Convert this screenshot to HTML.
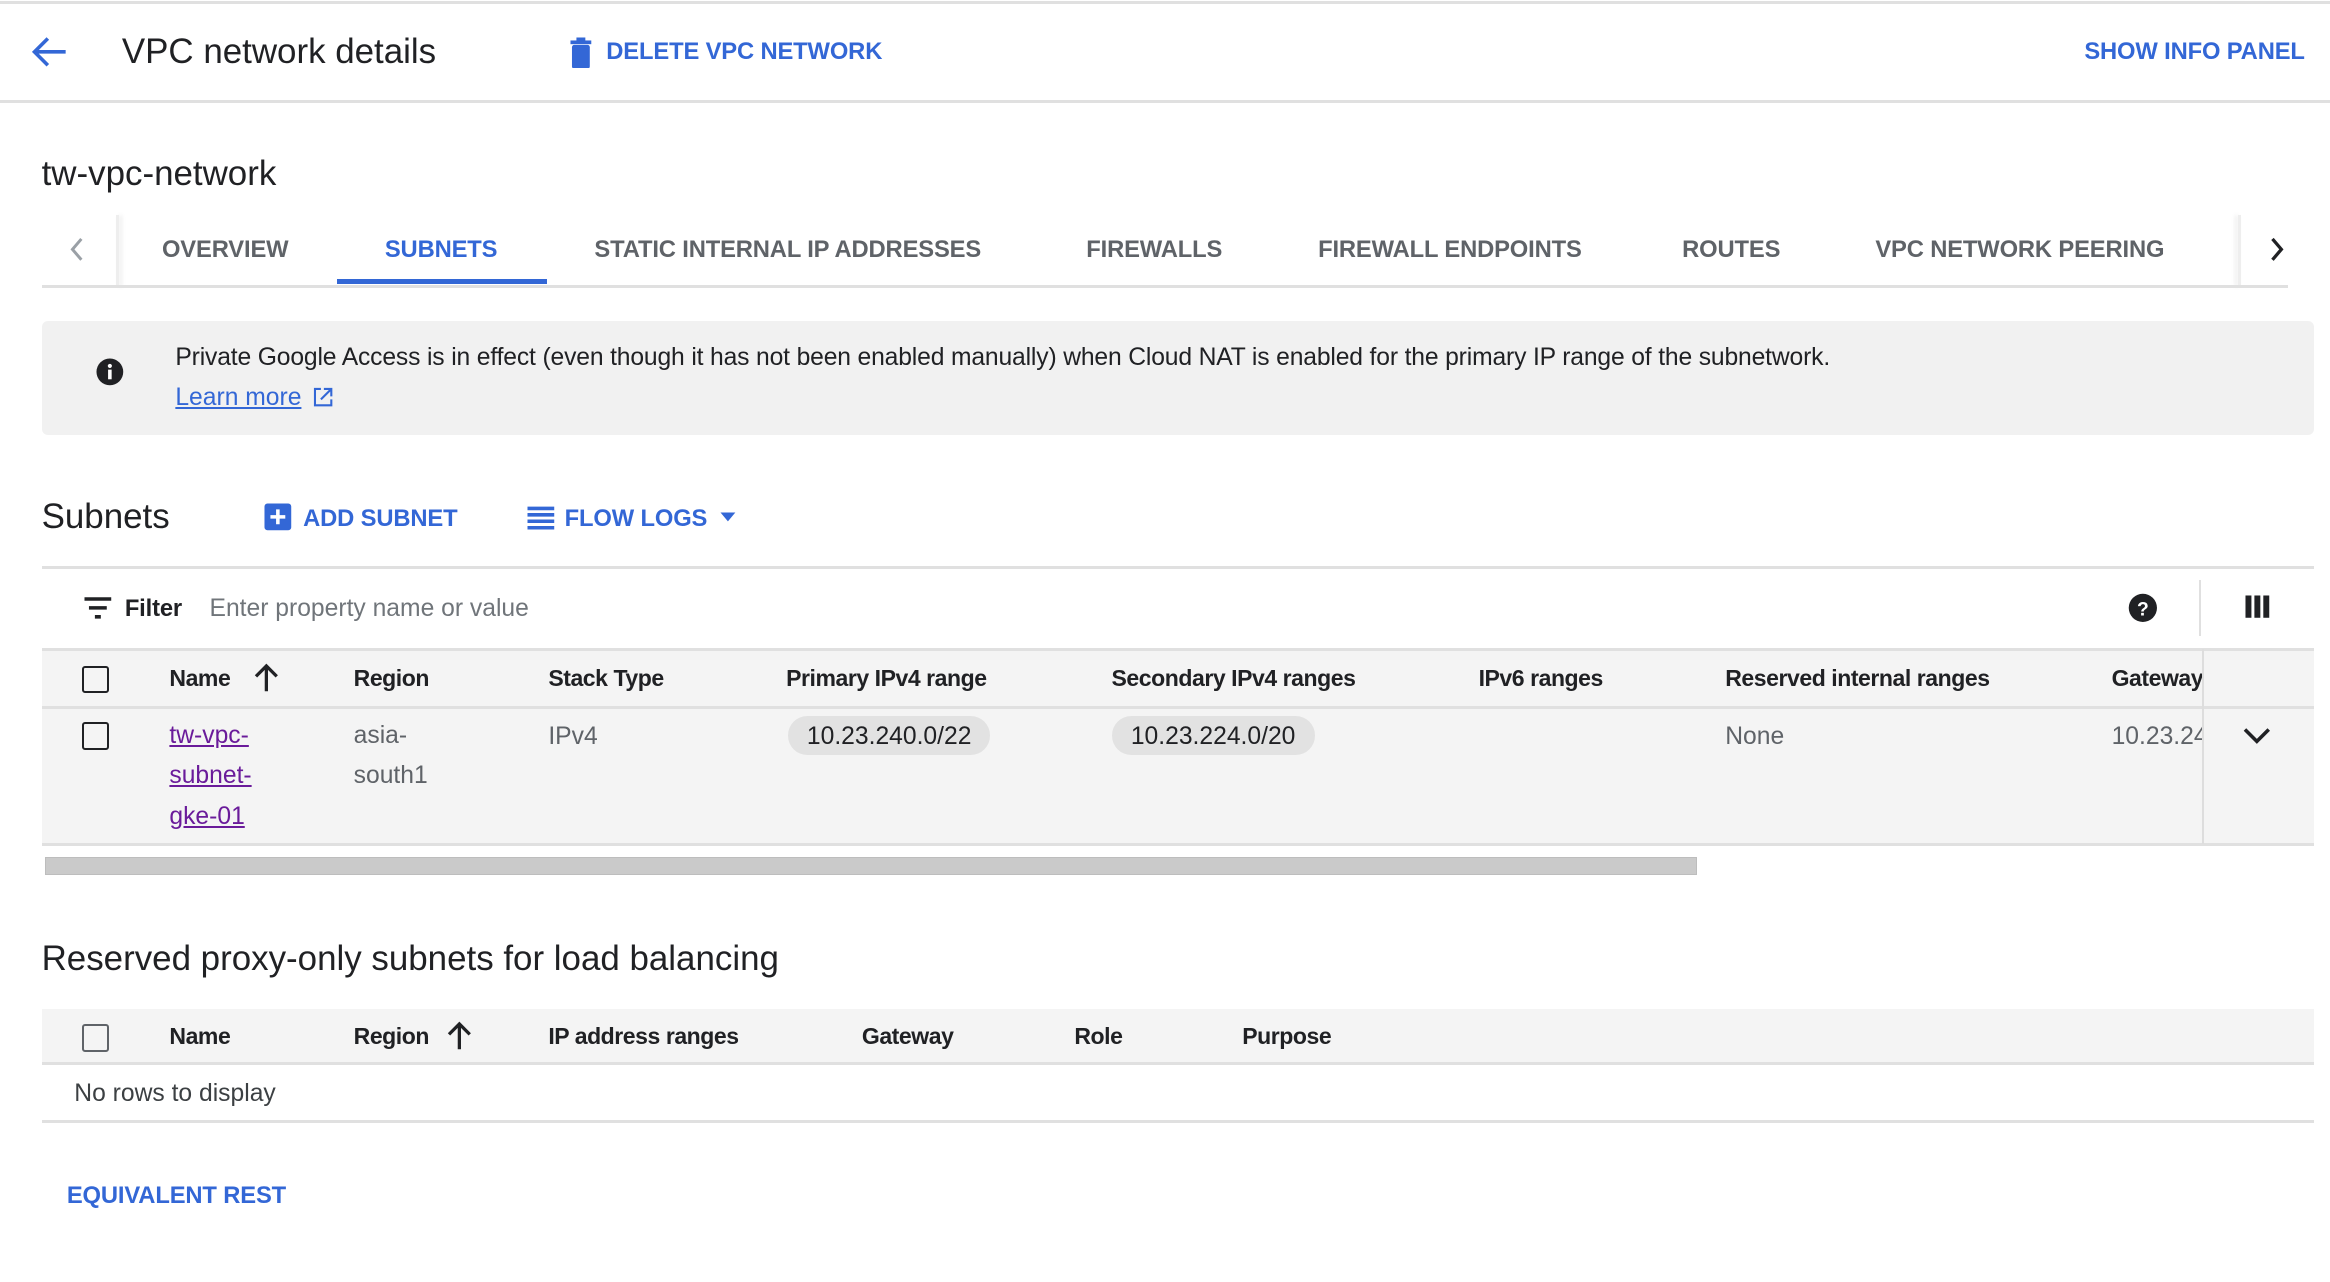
<!DOCTYPE html>
<html><head><meta charset="utf-8">
<style>
html,body{margin:0;padding:0;background:#fff;overflow:hidden}
body{width:2330px;height:1282px}
#r{zoom:1.486;width:1568px;height:863px;position:relative;font-family:"Liberation Sans",Arial,sans-serif;color:#202124}
.a{position:absolute;white-space:nowrap}
.t16{font-size:16px;line-height:20px}
.b{font-weight:bold}
.btn{font-size:16px;line-height:20px;color:#3367d6;font-weight:bold;letter-spacing:-0.1px}
.tab{font-size:16px;line-height:20px;color:#5f6368;font-weight:bold;letter-spacing:-0.1px;top:157px}
.h22{font-size:23.5px;line-height:28px}
.hd{font-size:15.5px;line-height:20px;font-weight:bold;color:#202124;letter-spacing:-0.3px}
.cell{font-size:16px;line-height:20px;color:#5f6368}
.cb{position:absolute;width:16px;height:16px;border:2px solid #202124;border-radius:2px}
.line{position:absolute;height:2px;background:#e0e0e0}
</style></head><body><div id="r">
<div class="line" style="left:0;top:1px;width:1568px"></div>
<div class="line" style="left:0;top:67px;width:1568px"></div>
<svg class="a" style="left:20px;top:23px" width="26" height="24" viewBox="0 0 26 24"><path d="M24 12H4M12 3L3 12l9 9" fill="none" stroke="#3367d6" stroke-width="2.4"/></svg>
<div class="a h22" style="left:82px;top:21px">VPC network details</div>
<svg class="a" style="left:383px;top:24px" width="16" height="22" viewBox="0 0 16 22"><rect x="2" y="6" width="12" height="16" rx="1.5" fill="#3367d6"/><rect x="1" y="3" width="14" height="2.5" fill="#3367d6"/><rect x="5" y="1" width="6" height="2.5" fill="#3367d6"/></svg>
<div class="a btn" style="left:408px;top:25px">DELETE VPC NETWORK</div>
<div class="a btn" style="right:17px;top:25px">SHOW INFO PANEL</div>

<div class="a h22" style="left:28px;top:103px">tw-vpc-network</div>
<div class="a" style="left:78px;top:145px;width:2px;height:48px;background:#eee;box-shadow:2px 0 3px rgba(0,0,0,.08)"></div>
<div class="a" style="left:1506px;top:145px;width:2px;height:48px;background:#eee;box-shadow:-2px 0 3px rgba(0,0,0,.08)"></div>
<svg class="a" style="left:46px;top:159px" width="12" height="18" viewBox="0 0 12 18"><path d="M9 2L3 9l6 7" fill="none" stroke="#9aa0a6" stroke-width="2"/></svg>
<svg class="a" style="left:1526px;top:159px" width="12" height="18" viewBox="0 0 12 18"><path d="M3 2l6 7-6 7" fill="none" stroke="#202124" stroke-width="2.2"/></svg>
<div class="a tab" style="left:109px;top:158px">OVERVIEW</div>
<div class="a tab" style="left:259px;top:158px;color:#3367d6">SUBNETS</div>
<div class="a tab" style="left:400px;top:158px">STATIC INTERNAL IP ADDRESSES</div>
<div class="a tab" style="left:731px;top:158px">FIREWALLS</div>
<div class="a tab" style="left:887px;top:158px">FIREWALL ENDPOINTS</div>
<div class="a tab" style="left:1132px;top:158px">ROUTES</div>
<div class="a tab" style="left:1262px;top:158px">VPC NETWORK PEERING</div>
<div class="a" style="left:227px;top:188px;width:141px;height:3px;background:#3367d6"></div>
<div class="line" style="left:28px;top:192px;width:1512px"></div>

<div class="a" style="left:28px;top:216px;width:1529px;height:77px;background:#f1f1f1;border-radius:4px"></div>
<svg class="a" style="left:64px;top:240px" width="20" height="20" viewBox="0 0 20 20"><circle cx="10" cy="10" r="9" fill="#202124"/><rect x="8.8" y="8.5" width="2.4" height="6.5" fill="#fff"/><circle cx="10" cy="6" r="1.4" fill="#fff"/></svg>
<div class="a t16" style="left:118px;top:231px;font-size:16.6px;letter-spacing:-0.1px">Private Google Access is in effect (even though it has not been enabled manually) when Cloud NAT is enabled for the primary IP range of the subnetwork.</div>
<div class="a t16" style="left:118px;top:258px;font-size:16.6px;color:#3367d6;text-decoration:underline">Learn more</div>
<svg class="a" style="left:210px;top:260px" width="15" height="15" viewBox="0 0 15 15"><path d="M6 2H2v11h11V9M8 2h5v5M13 2L6 9" fill="none" stroke="#3367d6" stroke-width="1.4"/></svg>

<div class="a h22" style="left:28px;top:334px">Subnets</div>
<svg class="a" style="left:177px;top:338px" width="20" height="20" viewBox="0 0 20 20"><rect x="1" y="1" width="18" height="18" rx="2" fill="#3367d6"/><path d="M10 5v10M5 10h10" stroke="#fff" stroke-width="2.4"/></svg>
<div class="a btn" style="left:204px;top:339px">ADD SUBNET</div>
<svg class="a" style="left:354px;top:339px" width="20" height="18" viewBox="0 0 20 18"><path d="M1 3h18M1 7.3h18M1 11.6h18M1 16h18" stroke="#3367d6" stroke-width="2.4"/></svg>
<div class="a btn" style="left:380px;top:339px">FLOW LOGS</div>
<svg class="a" style="left:484px;top:344px" width="12" height="8" viewBox="0 0 12 8"><path d="M1 1h10L6 7z" fill="#3367d6"/></svg>
<div class="line" style="left:28px;top:381px;width:1529px"></div>

<svg class="a" style="left:56px;top:401px" width="20" height="16" viewBox="0 0 20 16"><path d="M1 2h18M4 8h12M8 14h4" stroke="#202124" stroke-width="2.4"/></svg>
<div class="a t16 b" style="left:84px;top:400px;letter-spacing:-0.1px">Filter</div>
<div class="a t16" style="left:141px;top:400px;color:#70757a;font-size:16.6px">Enter property name or value</div>
<svg class="a" style="left:1432px;top:399px" width="20" height="20" viewBox="0 0 20 20"><circle cx="10" cy="10" r="9.5" fill="#202124"/><text x="10" y="15" font-family="Liberation Sans" font-weight="bold" font-size="13" fill="#fff" text-anchor="middle">?</text></svg>
<div class="a" style="left:1480px;top:390px;width:1px;height:38px;background:#e0e0e0"></div>
<svg class="a" style="left:1510px;top:400px" width="18" height="17" viewBox="0 0 18 17"><rect x="1" y="1" width="4" height="15" fill="#202124"/><rect x="7" y="1" width="4" height="15" fill="#202124"/><rect x="13" y="1" width="4" height="15" fill="#202124"/></svg>

<div class="a" style="left:28px;top:437px;width:1529px;height:131px;background:#f4f4f4"></div>
<div class="line" style="left:28px;top:436px;width:1529px"></div>
<div class="line" style="left:28px;top:475px;width:1529px"></div>
<div class="line" style="left:28px;top:567px;width:1529px"></div>
<div class="a" style="left:1482px;top:437px;width:1px;height:131px;background:#ddd"></div>
<div class="cb" style="left:55px;top:448px"></div>
<div class="a hd" style="left:114px;top:447px">Name</div>
<svg class="a" style="left:170px;top:446px" width="18" height="20" viewBox="0 0 18 20"><path d="M9 19V2M2 9l7-7 7 7" fill="none" stroke="#202124" stroke-width="2.2"/></svg>
<div class="a hd" style="left:238px;top:447px">Region</div>
<div class="a hd" style="left:369px;top:447px">Stack Type</div>
<div class="a hd" style="left:529px;top:447px">Primary IPv4 range</div>
<div class="a hd" style="left:748px;top:447px">Secondary IPv4 ranges</div>
<div class="a hd" style="left:995px;top:447px">IPv6 ranges</div>
<div class="a hd" style="left:1161px;top:447px">Reserved internal ranges</div>
<div class="a hd" style="left:1421px;top:447px;width:61px;overflow:hidden">Gateway</div>

<div class="cb" style="left:55px;top:486px"></div>
<div class="a t16" style="left:114px;top:482px;line-height:27px;color:#6a1b9a;white-space:normal;width:70px;font-size:16.6px"><span style="text-decoration:underline">tw-vpc-</span><br><span style="text-decoration:underline">subnet-</span><br><span style="text-decoration:underline">gke-01</span></div>
<div class="a cell" style="left:238px;top:482px;line-height:27px;font-size:16.6px">asia-<br>south1</div>
<div class="a cell" style="left:369px;top:486px;font-size:16.6px">IPv4</div>
<div class="a" style="left:530px;top:482px;width:136px;height:26px;border-radius:13px;background:#e2e2e2"></div>
<div class="a t16" style="left:543px;top:486px;font-size:16.6px">10.23.240.0/22</div>
<div class="a" style="left:748px;top:482px;width:137px;height:26px;border-radius:13px;background:#e2e2e2"></div>
<div class="a t16" style="left:761px;top:486px;font-size:16.6px">10.23.224.0/20</div>
<div class="a cell" style="left:1161px;top:486px;font-size:16.6px">None</div>
<div class="a cell" style="left:1421px;top:486px;width:61px;overflow:hidden;font-size:16.6px">10.23.240.1</div>
<svg class="a" style="left:1509px;top:488px" width="20" height="14" viewBox="0 0 20 14"><path d="M2 3l8 8 8-8" fill="none" stroke="#202124" stroke-width="2.4"/></svg>

<div class="a" style="left:30px;top:577px;width:1112px;height:12px;background:#cacaca;border:1px solid #bdbdbd;box-sizing:border-box"></div>

<div class="a h22" style="left:28px;top:631px">Reserved proxy-only subnets for load balancing</div>
<div class="a" style="left:28px;top:679px;width:1529px;height:37px;background:#f4f4f4"></div>
<div class="line" style="left:28px;top:715px;width:1529px"></div>
<div class="cb" style="left:55px;top:689px;border-color:#5f6368"></div>
<div class="a hd" style="left:114px;top:688px">Name</div>
<div class="a hd" style="left:238px;top:688px">Region</div>
<svg class="a" style="left:300px;top:687px" width="18" height="20" viewBox="0 0 18 20"><path d="M9 19V2M2 9l7-7 7 7" fill="none" stroke="#202124" stroke-width="2.2"/></svg>
<div class="a hd" style="left:369px;top:688px">IP address ranges</div>
<div class="a hd" style="left:580px;top:688px">Gateway</div>
<div class="a hd" style="left:723px;top:688px">Role</div>
<div class="a hd" style="left:836px;top:688px">Purpose</div>
<div class="a cell" style="left:50px;top:726px;color:#3c4043;font-size:16.6px">No rows to display</div>
<div class="line" style="left:28px;top:754px;width:1529px"></div>

<div class="a btn" style="left:45px;top:795px">EQUIVALENT REST</div>
</div></body></html>
